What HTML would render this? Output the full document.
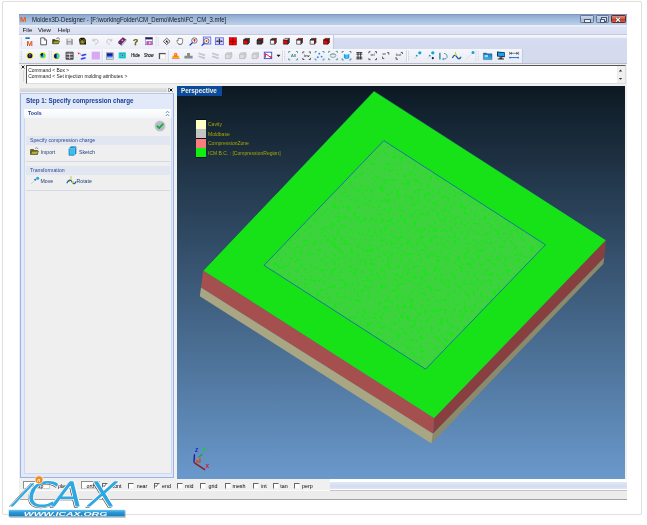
<!DOCTYPE html>
<html>
<head>
<meta charset="utf-8">
<title>Moldex3D-Designer</title>
<style>
html,body{margin:0;padding:0;}
body{width:647px;height:525px;background:#fff;position:relative;overflow:hidden;font-family:"Liberation Sans",sans-serif;color:#000;}
.abs{position:absolute;}
#frame{left:1.6px;top:1.3px;width:638.3px;height:512px;border:1px solid #e0e0e0;border-radius:2px;box-shadow:0 0 1px #ececec;background:#fff;}
#win{will-change:transform;filter:blur(0.3px);left:19px;top:14px;width:608px;height:486px;background:#f0f0f0;overflow:hidden;}
/* all coords inside #win are page coords minus (19,14) */
#title{left:0;top:0;width:608px;height:11px;background:linear-gradient(#6f86a8 0,#8ea9cf 1px,#9db6d8 4px,#b7cde8 10px);}
#title .t{left:13px;top:1.8px;font-size:6.8px;line-height:7px;white-space:pre;color:#1a1a1a;transform:scaleX(0.885);transform-origin:0 50%;}
.wb{top:1.2px;height:7.8px;box-sizing:border-box;border:0.6px solid #66789a;border-radius:1.2px;background:linear-gradient(#c9d6ea,#b3c4de 48%,#a3b7d6 52%,#bccbe4);}
#menu{left:0;top:11px;width:608px;height:9px;background:linear-gradient(#f1f3fb 0,#dfe4f5 2.5px,#dae0f3 8px);border-bottom:1px solid #c6cbdc;}
#menu span{position:absolute;top:1.5px;font-size:6px;line-height:7px;color:#111;}
#tb1{left:0;top:21px;width:608px;height:13.5px;background:linear-gradient(#f7f8fc 0,#eceef8 2.5px,#d7dcf0 3.5px,#d4daef 100%);}
#tb1 .bar{left:0;top:0;width:313.5px;height:13.5px;background:linear-gradient(#f9f9fd,#eceef7);border-right:1px solid #c5cadb;}
#tb2{left:0;top:34.5px;width:608px;height:14px;background:#d5dbef;}
#tb2 .bar{left:0;top:0;width:502.5px;height:14px;background:linear-gradient(#f6f7fc,#e9ecf6);border-right:1px solid #c5cadb;}
#cmd{left:0;top:48.5px;width:608px;height:23px;background:#f0f0f0;border-top:1px solid #b9bcc4;}
#cmdbox{left:7.3px;top:1px;width:598px;height:17.3px;background:#fff;border:1px solid #9a9a9a;border-top-color:#555;border-left-color:#555;border-right-color:#ddd;border-bottom-color:#ddd;}
#cmdbox div{position:absolute;left:1px;font-size:4.9px;line-height:6px;white-space:pre;color:#222;}
#lp{left:0;top:71.5px;width:158px;height:393px;background:#f0f0f0;}
#vp{left:158px;top:71.5px;width:448.2px;height:393.1px;overflow:hidden;}
.lg{left:31px;font-size:5px;line-height:6px;color:#a8a800;white-space:pre;}
.sh{left:6.5px;width:140px;height:9px;padding-left:4.5px;background:#e1e6f1;font-size:5.2px;line-height:9px;color:#2b4c96;white-space:pre;}
.lb{font-size:5.2px;line-height:6px;color:#223c80;white-space:pre;}
#sb{left:0;top:464.5px;width:608px;height:21.5px;background:#fff;}
.cb{top:4.3px;width:4.2px;height:4.2px;background:#fff;border-top:0.7px solid #666;border-left:0.7px solid #666;border-right:0.5px solid #f4f4f4;border-bottom:0.5px solid #f4f4f4;}
.st{top:4px;font-size:5.3px;line-height:6px;color:#000;white-space:pre;}
.fld{top:2px;height:8px;background:#fff;border:0.6px solid #d0d0d0;border-top-color:#8e8e8e;border-left-color:#8e8e8e;box-sizing:border-box;}
</style>
</head>
<body>
<div id="frame" class="abs"></div>
<div id="win" class="abs">
  <div id="title" class="abs"><div class="abs" style="left:1px;top:1.8px;font-size:7.6px;line-height:8px;font-weight:bold;color:#e25a1a;">M</div><div class="abs wb" style="left:561px;width:13.5px;"></div><div class="abs" style="left:565.3px;top:5px;width:4.6px;height:1.8px;background:#e8eef8;border:0.5px solid #4a566c;border-radius:0.5px;"></div>
<div class="abs wb" style="left:576.5px;width:13.5px;"></div><div class="abs" style="left:582.3px;top:3.2px;width:3.6px;height:2.6px;border:0.6px solid #4a566c;background:#dfe7f4;"></div><div class="abs" style="left:580.6px;top:4.6px;width:3.6px;height:2.6px;border:0.6px solid #4a566c;background:#e8eef8;"></div>
<div class="abs wb" style="left:591.8px;width:14.9px;background:linear-gradient(#e0907e,#cf5a48 45%,#c03a28 50%,#d0584a);border-color:#6a2a24;"></div>
<svg class="abs" style="left:596.3px;top:2.7px" width="6" height="5.400" viewBox="0 0 6 5.400"><path d="M0.900 0.700L5.100 4.700M5.100 0.700L0.900 4.700" stroke="#4a2a2a" stroke-width="2"/><path d="M0.900 0.700L5.100 4.700M5.100 0.700L0.900 4.700" stroke="#fff" stroke-width="1.200"/></svg><div class="t abs">Moldex3D-Designer - [F:\workingFolder\CM_Demo\Mesh\FC_CM_3.mfe]</div></div>
  <div id="menu" class="abs"><span style="left:3.6px">File</span><span style="left:19px">View</span><span style="left:38.8px">Help</span></div>
  <div id="tb1" class="abs"><div class="bar abs"></div></div>
  <div id="tb2" class="abs"><div class="bar abs"></div></div>
<svg class="abs" style="left:0;top:21px" width="608" height="28" viewBox="19 35 608 28">
<defs><linearGradient id="mg" x1="0" y1="0" x2="0" y2="1"><stop offset="0" stop-color="#f08a10"/><stop offset="1" stop-color="#c8281c"/></linearGradient><linearGradient id="mon" x1="0" y1="0" x2="0" y2="1"><stop offset="0" stop-color="#05055a"/><stop offset="0.45" stop-color="#1030e0"/><stop offset="1" stop-color="#a8e8ff"/></linearGradient><linearGradient id="og" x1="0" y1="0" x2="0" y2="1"><stop offset="0" stop-color="#ff3a00"/><stop offset="0.6" stop-color="#ffc400"/><stop offset="1" stop-color="#e01818"/></linearGradient><linearGradient id="fb" x1="0" y1="0" x2="0" y2="1"><stop offset="0" stop-color="#1c6cb8"/><stop offset="1" stop-color="#38b4ec"/></linearGradient></defs>
<path d="M21.3 37V46" stroke="#b4b8c6" stroke-width="0.8" stroke-dasharray="0.8 0.9"/>
<path d="M21.3 51V61" stroke="#b4b8c6" stroke-width="0.8" stroke-dasharray="0.8 0.9"/>
<rect x="25.3" y="37.3" width="4.6" height="1.8" rx="0.6" fill="#1a7fd4"/>
<text x="26.6" y="45.6" font-family="Liberation Sans,sans-serif" font-weight="bold" font-size="7.6" fill="url(#mg)">M</text>
<path d="M40.7 37.9h3.6l2.2 2.2v4.7h-5.8z" fill="#fff" stroke="#3a3a3a" stroke-width="0.8" stroke-linejoin="round"/><path d="M44.3 37.9v2.2h2.2" fill="none" stroke="#3a3a3a" stroke-width="0.6"/>
<path d="M52.6 39.6h2.4l0.7 0.8h2.6v3.2h-5.7z" fill="#4c4a10" stroke="#1e1d08" stroke-width="0.5"/><path d="M53.9 41.1h5.9l-1.4 2.6h-5.8z" fill="#a8a230" stroke="#2a2808" stroke-width="0.45"/><path d="M56.4 39c0.6-1.4 2.2-1.6 3-0.4l-0.1 1" fill="none" stroke="#222" stroke-width="0.6"/>
<path d="M66.4 38.7h5.6l0.9 0.9v5.1h-6.5z" fill="#9c9ca0"/><rect x="67.6" y="38.7" width="3.6" height="2.4" fill="#e4e4e8"/><rect x="67.9" y="42.3" width="3.2" height="2.4" fill="#cfcfd4"/>
<path d="M79 39.2l1.8-1.5h3.4l1.8 2.3v4.6h-6.2z" fill="#14140a"/><path d="M80.4 40.6h3.4v3h-3.4z" fill="#8c861c"/><circle cx="83.6" cy="41.2" r="1.5" fill="none" stroke="#b0a830" stroke-width="0.7"/><path d="M79.4 38.3l1.6 2.2" stroke="#b0a830" stroke-width="0.7"/>
<path d="M93.6 40.4c1.6-2 4.6-1.2 4.4 1.2c-0.2 1.6-1.6 2.4-3 2.6" fill="none" stroke="#b4b6bc" stroke-width="0.8"/><path d="M93 38.6v2.4h2.4" fill="none" stroke="#b4b6bc" stroke-width="0.8"/>
<path d="M111.2 40.4c-1.6-2-4.6-1.2-4.4 1.2c0.2 1.6 1.6 2.4 3 2.6" fill="none" stroke="#b4b6bc" stroke-width="0.8"/><path d="M111.8 38.6v2.4h-2.4" fill="none" stroke="#b4b6bc" stroke-width="0.8"/>
<path d="M118.3 41.6l4.6-4.3l3.2 2.2l-4.4 4.6z" fill="#6e1e84"/><path d="M118.3 41.6l3.4 2.5v1.5l-3.4-2.4z" fill="#3a1048"/><path d="M121.7 44.1l4.4-4.6v1.4l-4.4 4.7z" fill="#d8d8e0" stroke="#444" stroke-width="0.3"/><circle cx="122.4" cy="40.3" r="0.9" fill="#f0c020"/>
<text x="133" y="44.6" font-family="Liberation Sans,sans-serif" font-weight="bold" font-size="8.6" fill="#6e6e0c" stroke="#3c3c06" stroke-width="0.25">?</text>
<rect x="145.5" y="37.4" width="7" height="7.4" fill="#fff" stroke="#6a5a9a" stroke-width="0.5"/><rect x="145.5" y="37.4" width="7" height="2" fill="#1a1a5c"/><rect x="146.4" y="41.2" width="6.1" height="3.6" fill="#b050b8"/><rect x="148.8" y="42.2" width="2.6" height="1.6" fill="#f0e0ff"/><rect x="150.2" y="42.6" width="1.2" height="1" fill="#e03030"/>
<path d="M156.2 36.5V47" stroke="#cfd2de" stroke-width="0.9"/>
<path d="M157.1 36.5V47" stroke="#fdfdff" stroke-width="0.8"/>
<path d="M158.2 37V46" stroke="#b4b8c6" stroke-width="0.8" stroke-dasharray="0.8 0.9"/>
<path d="M166.7 38.2l3.4 3.2l-3.4 3.2l-3.4-3.2z" fill="#fafafa" stroke="#333" stroke-width="0.8"/><path d="M166 40.2l2.4 1l-1.2 0.5l0.6 1.3l-0.7 0.3l-0.6-1.3l-0.9 0.7z" fill="#222"/>
<path d="M177 41.4c-0.6-1.2 0.6-1.6 1.1-0.6v-1.9c0-0.8 1-0.8 1.1 0c0.1-0.9 1.1-0.9 1.2 0c0.1-0.7 1.1-0.7 1.2 0.1c0.1-0.5 1-0.5 1 0.3v2.7c0 1.6-0.9 2.6-2.6 2.6c-1.500 0-2.200-1-3-3.200z" fill="#fcfcfc" stroke="#444" stroke-width="0.6"/><path d="M178.100 43.600c1.200 0.800 2.900 0.700 4-0.100" stroke="#555" stroke-width="0.500" fill="none"/>
<path d="M192.600 42.500l-2.600 2.500" stroke="#1c34e0" stroke-width="1.200" stroke-linecap="round"/><circle cx="194.400" cy="40.500" r="2.700" fill="#f4f4f8" stroke="#444" stroke-width="0.700"/><circle cx="194.500" cy="40.100" r="1.100" fill="#e02020"/><path d="M194.500 41v1.300" stroke="#e02020" stroke-width="0.600"/>
<rect x="203.300" y="37" width="7.500" height="7" fill="#e8e8ff" stroke="#5a5af0" stroke-width="0.800"/><path d="M204.400 43.100l-2.400 2.300" stroke="#1c34e0" stroke-width="1.200" stroke-linecap="round"/><circle cx="206.400" cy="41" r="2.600" fill="#f6f6fa" stroke="#444" stroke-width="0.700"/><circle cx="206.500" cy="41" r="0.900" fill="#f04020"/>
<rect x="215.400" y="37.800" width="8" height="6.800" fill="#d4d4ff" stroke="#6a6af4" stroke-width="0.900"/><path d="M216.600 41.200h5.600M219.400 38.800v4.800" stroke="#111" stroke-width="0.800"/><path d="M219.400 38.400l-1 1.200h2zM219.400 44l-1-1.200h2zM216.200 41.200l1.200-1v2zM222.600 41.200l-1.200-1v2z" fill="#111"/>
<rect x="229.200" y="37.700" width="7.300" height="7.300" fill="#f40000" stroke="#8a0000" stroke-width="0.500"/><path d="M232.850 37.700v7.300M229.200 41.350h7.300" stroke="#7c0000" stroke-width="0.700"/>
<g stroke="#1c1c1c" stroke-width="0.6" stroke-linejoin="round"><path d="M243.5 40.0h4.400v4.200h-4.400z" fill="#ee0000"/><path d="M245.0 38.4h4.4l-1.5 1.600h-4.400z" fill="#3a3a3e"/><path d="M247.9 40.0l1.500-1.600v4.200l-1.500 1.600z" fill="#3a3a3e"/></g>
<g stroke="#1c1c1c" stroke-width="0.6" stroke-linejoin="round"><path d="M257.0 40.0h4.400v4.200h-4.400z" fill="#3a3a3e"/><path d="M258.5 38.4h4.4l-1.5 1.600h-4.400z" fill="#ee0000"/><path d="M261.4 40.0l1.500-1.600v4.200l-1.500 1.600z" fill="#8a0000"/></g>
<g stroke="#1c1c1c" stroke-width="0.6" stroke-linejoin="round"><path d="M270.4 40.0h4.400v4.200h-4.400z" fill="#f6f6f8"/><path d="M271.9 38.4h4.4l-1.5 1.600h-4.400z" fill="#3a3a3e"/><path d="M274.8 40.0l1.500-1.600v4.200l-1.500 1.600z" fill="#ee0000"/></g>
<g stroke="#1c1c1c" stroke-width="0.6" stroke-linejoin="round"><path d="M283.4 40.0h4.400v4.200h-4.400z" fill="#ee0000"/><path d="M284.9 38.4h4.4l-1.5 1.600h-4.400z" fill="#f6f6f8"/><path d="M287.8 40.0l1.500-1.600v4.200l-1.500 1.600z" fill="#3a3a3e"/></g>
<g stroke="#1c1c1c" stroke-width="0.6" stroke-linejoin="round"><path d="M296.6 40.0h4.400v4.200h-4.400z" fill="#f6f6f8"/><path d="M298.1 38.4h4.4l-1.5 1.600h-4.400z" fill="#ee0000"/><path d="M301.0 40.0l1.500-1.600v4.200l-1.500 1.600z" fill="#3a3a3e"/></g>
<g stroke="#1c1c1c" stroke-width="0.6" stroke-linejoin="round"><path d="M310.1 40.0h4.400v4.200h-4.400z" fill="#f6f6f8"/><path d="M311.6 38.4h4.4l-1.5 1.600h-4.400z" fill="#3a3a3e"/><path d="M314.5 40.0l1.500-1.600v4.200l-1.500 1.600z" fill="#ee0000"/></g>
<g stroke="#1c1c1c" stroke-width="0.6" stroke-linejoin="round"><path d="M323.5 40.0h4.400v4.200h-4.400z" fill="#ee0000"/><path d="M325.0 38.4h4.4l-1.5 1.600h-4.400z" fill="#d00000"/><path d="M327.9 40.0l1.500-1.600v4.200l-1.500 1.600z" fill="#b00000"/></g>
<circle cx="29.9" cy="55.7" r="3.300" fill="#f4f000"/>
<circle cx="29.9" cy="55.7" r="2.500" fill="#0c0c58"/><path d="M28.9 55.2l1-1l1 1M29.9 54.5v2.400" stroke="#c8c820" stroke-width="0.500" fill="none"/>
<circle cx="42.7" cy="55.5" r="3.300" fill="#f4f000"/>
<circle cx="42.7" cy="55.5" r="2.600" fill="#40d890"/><path d="M40.300000000000004 54.5a2.600 2.600 0 0 1 2.600-1.600l0.400 2.800l-1.200 1.600z" fill="#10105c"/><circle cx="43.7" cy="56.1" r="1.200" fill="#30c8f0"/>
<path d="M49.3 50V62" stroke="#cfd2de" stroke-width="0.9"/>
<path d="M50.199999999999996 50V62" stroke="#fdfdff" stroke-width="0.8"/>
<path d="M51.3 51V61" stroke="#b4b8c6" stroke-width="0.8" stroke-dasharray="0.8 0.9"/>
<circle cx="56.6" cy="56" r="3.300" fill="#f4f000"/>
<circle cx="56.6" cy="56" r="2.600" fill="#10105c"/><path d="M56.6 53.4a2.600 2.600 0 0 1 0 5.200z" fill="#30d8e8"/>
<rect x="65.600" y="51.800" width="8" height="8" rx="0.800" fill="#4a4a4a"/><path d="M66.400 54.400h6.400M66.400 57.200h6.400M69.600 52.600v6.400" stroke="#e8e8e8" stroke-width="0.800"/><rect x="66.400" y="52.600" width="6.400" height="1.200" fill="#8a8a8a"/>
<path d="M77.600 52.200l2.200 1.300l-1.300 1z" fill="#e81010"/><path d="M79.600 53.300l1.200 1" stroke="#e81010" stroke-width="0.700"/><ellipse cx="83.800" cy="54.900" rx="2.800" ry="1" transform="rotate(-14 83.800 54.900)" fill="#3848f0"/><ellipse cx="83.200" cy="58.400" rx="2.800" ry="1" transform="rotate(-14 83.200 58.400)" fill="#3848f0"/>
<rect x="91.700" y="51.700" width="8.200" height="7.800" fill="#d9a8f4"/>
<path d="M102.3 50V62" stroke="#cfd2de" stroke-width="0.9"/>
<path d="M103.2 50V62" stroke="#fdfdff" stroke-width="0.8"/>
<rect x="106.300" y="52.800" width="7" height="6.400" fill="#d8d8d8" stroke="#555" stroke-width="0.400"/><rect x="106.900" y="53.300" width="5.800" height="4.900" fill="url(#mon)"/>
<rect x="118.600" y="52.200" width="7.400" height="6.400" rx="0.600" fill="#28d8dc"/><rect x="120" y="53.400" width="4.600" height="4" fill="none" stroke="#1890a0" stroke-width="0.500"/><circle cx="122.400" cy="55.400" r="0.800" fill="#e03030"/>
<text x="131.2" y="57.4" font-family="Liberation Sans,sans-serif" font-size="5.1" fill="#111" stroke="#111" stroke-width="0.15" textLength="8.6" lengthAdjust="spacingAndGlyphs">Hide</text>
<text x="143.9" y="57.4" font-family="Liberation Sans,sans-serif" font-size="5.1" fill="#111" stroke="#111" stroke-width="0.15" textLength="9.6" lengthAdjust="spacingAndGlyphs">Show</text>
<rect x="158.900" y="53" width="6.800" height="6" fill="#fbfbfb" stroke="#bbb" stroke-width="0.300"/><path d="M158.900 53.600h6.800" stroke="#555" stroke-width="1.200"/><path d="M159.500 53v6" stroke="#555" stroke-width="1.200"/>
<path d="M168.8 50V62" stroke="#cfd2de" stroke-width="0.9"/>
<path d="M169.70000000000002 50V62" stroke="#fdfdff" stroke-width="0.8"/>
<path d="M171.800 58.600c0.300-2.200 1.700-2.800 2.600-3h2.600c0.900 0.200 2.300 0.800 2.600 3z" fill="url(#og)"/><circle cx="175.700" cy="54.300" r="1.600" fill="#ff5a10"/><circle cx="175.700" cy="54.400" r="0.800" fill="#ffd020"/>
<path d="M187 53h3v2.800h2.600v2.600h-8.200v-2.600h2.600z" fill="#8c8c90"/>
<path d="M198.6 53.2l6.4 2.2M198.6 56.2l6.4 2.2" stroke="#c4c6cc" stroke-width="1.7"/>
<path d="M212.1 53.2l6.4 2.2M212.1 56.2l6.4 2.2" stroke="#c4c6cc" stroke-width="1.7"/>
<path d="M225.4 54.2l1.600-1.400h4.800v4.400l-1.600 1.400h-4.800z" fill="#dcdce0" stroke="#a8a8ae" stroke-width="0.600"/><path d="M225.4 54.2h4.800v4.400M230.2 54.2l1.600-1.400" stroke="#a8a8ae" stroke-width="0.500" fill="none"/>
<path d="M239.60000000000002 54.2l1.600-1.400h4.800v4.400l-1.600 1.400h-4.800z" fill="#dcdce0" stroke="#a8a8ae" stroke-width="0.600"/><path d="M239.60000000000002 54.2h4.800v4.400M244.4 54.2l1.600-1.400" stroke="#a8a8ae" stroke-width="0.500" fill="none"/>
<path d="M252.10000000000002 54.2l1.600-1.400h4.800v4.400l-1.600 1.400h-4.800z" fill="#dcdce0" stroke="#a8a8ae" stroke-width="0.600"/><path d="M252.10000000000002 54.2h4.800v4.400M256.90000000000003 54.2l1.600-1.400" stroke="#a8a8ae" stroke-width="0.500" fill="none"/>
<rect x="264.300" y="52.200" width="7.400" height="6.400" fill="#fff" stroke="#3a4ae0" stroke-width="0.900"/><path d="M265.400 57.600v-4l5 3.600" stroke="#e02020" stroke-width="1" fill="none"/><circle cx="271" cy="57" r="0.900" fill="#e02020"/>
<path d="M276.500 54.800h4l-2 2.200z" fill="#111"/>
<path d="M282.6 50V62" stroke="#cfd2de" stroke-width="0.9"/>
<path d="M283.5 50V62" stroke="#fdfdff" stroke-width="0.8"/>
<path d="M284.6 51V61" stroke="#b4b8c6" stroke-width="0.8" stroke-dasharray="0.8 0.9"/>
<path d="M288.70000000000005 53.1V51.5H290.30000000000007M295.9 51.5H297.5V53.1M297.5 58.300000000000004V59.900000000000006H295.9M290.30000000000007 59.900000000000006H288.70000000000005V58.300000000000004" stroke="#3c8a84" stroke-width="0.800" fill="none"/>
<text x="290.700" y="57.300" font-family="Liberation Sans,sans-serif" font-size="4.400" font-weight="bold" fill="#4a8a88">All</text>
<path d="M302.8 53.50000000000001V51.900000000000006H304.40000000000003M308.8 51.900000000000006H310.40000000000003V53.50000000000001M310.40000000000003 57.9V59.5H308.8M304.40000000000003 59.5H302.8V57.9" stroke="#333" stroke-width="0.800" fill="none"/>
<text x="304.200" y="56.800" font-family="Liberation Sans,sans-serif" font-size="3.800" font-weight="bold" fill="#333">inv</text>
<path d="M315.20000000000005 53.1V51.5H316.80000000000007M322.4 51.5H324.0V53.1M324.0 58.300000000000004V59.900000000000006H322.4M316.80000000000007 59.900000000000006H315.20000000000005V58.300000000000004" stroke="#3c8a84" stroke-width="0.800" fill="none"/>
<circle cx="319.300" cy="53.700" r="0.900" fill="#2080f0"/><circle cx="317.800" cy="57.200" r="0.900" fill="#2080f0"/><circle cx="321.600" cy="56.600" r="0.900" fill="#2080f0"/>
<path d="M328.6 52.9V51.3H330.20000000000005M335.79999999999995 51.3H337.4V52.9M337.4 58.1V59.7H335.79999999999995M330.20000000000005 59.7H328.6V58.1" stroke="#3c8a84" stroke-width="0.800" fill="none"/>
<ellipse cx="333" cy="55.500" rx="2.800" ry="1.900" fill="none" stroke="#5a8c8c" stroke-width="0.700"/><path d="M330.600 54.600h4.800" stroke="#5a8c8c" stroke-width="0.500"/>
<path d="M342.1 53.1V51.5H343.70000000000005M349.29999999999995 51.5H350.9V53.1M350.9 58.300000000000004V59.900000000000006H349.29999999999995M343.70000000000005 59.900000000000006H342.1V58.300000000000004" stroke="#3c6a80" stroke-width="0.800" fill="none"/>
<path d="M343.900 53.800l1.600 1h2.400l1.400-1v4l-1.400 1.200h-2.400l-1.600-1.200z" fill="#18a0e4"/><path d="M345.500 54.800h2.400v4h-2.400z" fill="#40c4f8"/>
<path d="M356.300 52.600h6M356.300 54.200h6M356.300 57.200h6M356.300 58.800h6M358 52v7.400M360.600 52v7.400" stroke="#333" stroke-width="0.900"/>
<path d="M368.9 53.300000000000004V51.7H370.5M374.9 51.7H376.5V53.300000000000004M376.5 58.1V59.7H374.9M370.5 59.7H368.9V58.1" stroke="#333" stroke-width="0.800" fill="none"/>
<text x="370.400" y="56.300" font-family="Liberation Sans,sans-serif" font-size="3.400" fill="#333">sel</text>
<path d="M382.600 58.600v-2M382.600 58.600h1.600M387.200 52.600h1.600v2" stroke="#333" stroke-width="0.800" fill="none"/><text x="382.400" y="55" font-family="Liberation Sans,sans-serif" font-size="3.200" fill="#333">on</text>
<path d="M396 59.200v-2.200M396 59.200h2M400.800 52.400h1.600v1.600" stroke="#333" stroke-width="0.800" fill="none"/><text x="395.800" y="56.200" font-family="Liberation Sans,sans-serif" font-size="3.400" fill="#333">last</text>
<path d="M406.5 50V62" stroke="#cfd2de" stroke-width="0.9"/>
<path d="M407.4 50V62" stroke="#fdfdff" stroke-width="0.8"/>
<path d="M408.5 51V61" stroke="#b4b8c6" stroke-width="0.8" stroke-dasharray="0.8 0.9"/>
<path d="M414.200 58.800l2-2" stroke="#b8bcc0" stroke-width="0.600"/><circle cx="416.700" cy="55.700" r="0.900" fill="#2890a8"/><circle cx="419.800" cy="52.800" r="1.600" fill="#10a0e8"/>
<path d="M427.200 58.800l2-2" stroke="#c8ccd0" stroke-width="0.600"/><circle cx="429.700" cy="55.700" r="0.900" fill="#2890a8"/><circle cx="432.800" cy="52.800" r="1.600" fill="#10a0e8"/><path d="M432.800 56.800l1.300 1.300l-1.300 1.300l-1.300-1.300z" fill="#111"/>
<path d="M439.900 52.800v6.800" stroke="#2a8aa0" stroke-width="1.400"/><path d="M444 53.400c4 0.200 4.200 5.600 0.400 5.600h-1.400" stroke="#4a8a98" stroke-width="0.900" fill="none"/><path d="M442 59l1.600-1.200v2.400z" fill="#4a8a98"/>
<path d="M455.600 51.800v3.400" stroke="#d8c800" stroke-width="0.900"/><path d="M452.400 58c1.600-3.600 3.200-3 4.600-0.800s3 2.200 4-0.400" stroke="#1858b0" stroke-width="1.300" fill="none"/><circle cx="455.800" cy="54.800" r="0.900" fill="#e8d400"/><circle cx="460" cy="58" r="0.800" fill="#20a040"/>
<path d="M466.800 58.800l5.600-5.600" stroke="#d0d2d8" stroke-width="0.600"/><circle cx="473" cy="52.600" r="1.500" fill="#10a0e8"/>
<path d="M476.1 50V62" stroke="#cfd2de" stroke-width="0.9"/>
<path d="M477.0 50V62" stroke="#fdfdff" stroke-width="0.8"/>
<path d="M478.1 51V61" stroke="#b4b8c6" stroke-width="0.8" stroke-dasharray="0.8 0.9"/>
<path d="M483.400 53h3l0.600 0.800h5v5.800h-8.600z" fill="url(#fb)" stroke="#1a4c80" stroke-width="0.400"/><rect x="484.600" y="55" width="3.400" height="2.200" fill="#9cdcf8"/>
<path d="M497 51.600l7.800 0.600v5l-7.800-0.600z" fill="#083060"/><path d="M498 52.600l6 0.400v3.200l-6-0.400z" fill="#20a0e8"/><path d="M499.400 57.200h3v1.400h1.600v1h-6.200v-1h1.600z" fill="#333"/>
<path d="M509.600 51.800v3M518.600 51.800v3M512 53.300h4.200M510.200 53.300l1.400-0.900v1.800zM518 53.300l-1.400-0.900v1.800z" stroke="#444" stroke-width="0.600" fill="#444"/><path d="M510 57.600h8.200" stroke="#2070e0" stroke-width="1"/><circle cx="510" cy="57.600" r="0.900" fill="#2070e0"/><circle cx="518.200" cy="57.600" r="0.900" fill="#2070e0"/>
</svg>
  <div id="cmd" class="abs"><svg class="abs" style="left:1.5px;top:1px" width="4" height="4" viewBox="0 0 4 4"><path d="M0.600 0.600L3.400 3.400M3.400 0.600L0.600 3.400" stroke="#111" stroke-width="0.900"/></svg>
<div class="abs" style="left:2.5px;top:6.5px;width:2.2px;height:11.5px;background:linear-gradient(90deg,#fafafa,#cfcfcf);border-radius:1px;"></div>
<div id="cmdbox" class="abs"><span class="abs" style="right:0;top:0;width:8.3px;height:100%;background:#efefef;"></span><div style="top:2.3px">Command &lt; Box &gt;</div><div style="top:8.9px">Command &lt; Set injection molding attributes &gt;</div></div><svg class="abs" style="left:599px;top:4px" width="5" height="14" viewBox="0 0 5 14"><path d="M0.800 3.400L2.500 1.600L4.200 3.400z" fill="#333"/><path d="M0.800 10L2.500 11.800L4.200 10z" fill="#333"/></svg></div>
  <div id="lp" class="abs">
<div class="abs" style="left:1px;top:2.5px;width:147px;height:3.5px;background:linear-gradient(#e2e2e2,#d2d2d2);border-radius:1px;"></div>
<div class="abs" style="left:148.5px;top:2px;width:1px;height:4.5px;background:#999;"></div>
<svg class="abs" style="left:150.3px;top:2.2px" width="4" height="4" viewBox="0 0 4 4"><path d="M0.6 0.6L3.4 3.4M3.4 0.6L0.6 3.4" stroke="#111" stroke-width="1"/></svg>
<div class="abs" style="left:1px;top:7.3px;width:152.4px;height:383.2px;background:#e2e9f9;border:1px solid #9ab3e4;border-top-color:#b5c8ee;"></div>
<div class="abs" style="left:7px;top:11.4px;font-size:7.1px;line-height:8px;font-weight:bold;color:#1c3f94;white-space:pre;transform:scaleX(0.88);transform-origin:0 50%;">Step 1: Specify compression charge</div>
<div class="abs" style="left:4.5px;top:23.5px;width:147.5px;height:8.5px;background:linear-gradient(#ffffff,#f3f5fb);border-radius:1px 1px 0 0;"></div>
<div class="abs" style="left:8.5px;top:24.5px;font-size:6px;line-height:7px;font-weight:bold;color:#1c3c8c;transform:scaleX(0.87);transform-origin:0 50%;">Tools</div>
<svg class="abs" style="left:146px;top:24.5px" width="5" height="7" viewBox="0 0 5 7"><path d="M0.8 3L2.5 1.2L4.2 3M0.8 6L2.5 4.2L4.2 6" stroke="#5b78b8" stroke-width="0.8" fill="none"/></svg>
<div class="abs" style="left:4.5px;top:32px;width:146.5px;height:355.5px;background:#efefef;border:0.5px solid #cdd9f3;border-top:none;"></div>
<svg class="abs" style="left:135px;top:34.5px" width="12" height="12" viewBox="0 0 12 12"><circle cx="6" cy="6" r="5.5" fill="#c4cbd6"/><circle cx="6" cy="6" r="4.6" fill="#b4bcc9"/><path d="M3.3 6.2L5.2 8.1L8.8 4.2" stroke="#1fa83a" stroke-width="1.7" fill="none" stroke-linecap="round" stroke-linejoin="round"/></svg>
<div class="abs sh" style="top:50px;">Specify compression charge</div>
<div class="abs" style="left:6.5px;top:75.5px;width:144.5px;height:0.7px;background:#d5d9e2;"></div>
<div class="abs sh" style="top:80px;">Transformation</div>
<div class="abs" style="left:6.5px;top:104.5px;width:144.5px;height:0.7px;background:#d5d9e2;"></div>
<div class="abs lb" style="left:21.5px;top:63px;">Import</div>
<div class="abs lb" style="left:60px;top:63px;">Sketch</div>
<div class="abs lb" style="left:21.5px;top:92.3px;">Move</div>
<div class="abs lb" style="left:57.5px;top:92.3px;">Rotate</div>
<!-- import icon (folder) -->
<svg class="abs" style="left:11px;top:61.3px" width="9" height="8" viewBox="0 0 9 8"><path d="M0.5 2.5h3l0.8 1h3.2v3.8h-7z" fill="#6e6a16" stroke="#26240a" stroke-width="0.5"/><path d="M2 4.2h6.6l-1.3 3.1h-6.6z" fill="#b9b23a" stroke="#26240a" stroke-width="0.4"/><path d="M5 1.8c1-1.4 2.4-1.2 3 0" stroke="#333" stroke-width="0.5" fill="none"/></svg>
<!-- sketch icon (cyan cube) -->
<svg class="abs" style="left:48.5px;top:60.6px" width="9" height="10" viewBox="0 0 9 10"><path d="M1 2.8L2.8 0.8h5.2v6.4L6.2 9.2H1z" fill="#1a9ee0" stroke="#0c5f9c" stroke-width="0.6"/><path d="M1 2.8h5.2v6.4M6.2 2.8L8 0.8" stroke="#bfe8ff" stroke-width="0.6" fill="none"/><rect x="1.6" y="3.4" width="4" height="5.2" fill="#3cc0f4"/></svg>
<!-- move icon -->
<svg class="abs" style="left:10.5px;top:90px" width="10" height="9" viewBox="0 0 10 9"><path d="M1 8L4 5" stroke="#9aa" stroke-width="0.6" stroke-dasharray="1 0.7"/><circle cx="5.2" cy="3.8" r="1" fill="#2270d0"/><circle cx="7.6" cy="2.2" r="1.5" fill="#18a8e8"/></svg>
<!-- rotate icon -->
<svg class="abs" style="left:46.5px;top:89.3px" width="11" height="10" viewBox="0 0 11 10"><path d="M0.8 8.2C3 3.5 5 5 6.5 7.5S9.5 8 10 6.5" stroke="#1c5ca8" stroke-width="1.2" fill="none"/><path d="M5 1v4" stroke="#c8b400" stroke-width="0.7"/><circle cx="6.8" cy="7.3" r="1.1" fill="#e0c800"/><circle cx="3" cy="6" r="0.8" fill="#2aa02a"/></svg>
</div>
  <div id="vp" class="abs"><svg class="abs" style="left:0;top:0" width="449" height="393.5" viewBox="0 0 449 393.5">
<defs>
<linearGradient id="bg" x1="0" y1="0" x2="0" y2="1"><stop offset="0" stop-color="#0c1923"/><stop offset="1" stop-color="#6a99cc"/></linearGradient>
<filter id="mot" x="0" y="0" width="1" height="1" color-interpolation-filters="sRGB"><feTurbulence type="fractalNoise" baseFrequency="0.3" numOctaves="2" seed="7" result="n"/><feColorMatrix in="n" type="matrix" values="0 0 0 0 0.09  0 0 0 0 0.9  0 0 0 0 0.09  7 0 0 0 -3.9" result="p"/><feComposite in="p" in2="SourceGraphic" operator="atop"/></filter>
</defs>
<rect width="449" height="393.5" fill="url(#bg)"/>
<polygon points="26.2,184.5 257.1,331.9 256.0,347.8 24.0,201.5" fill="#a5504f"/>
<polygon points="257.1,331.9 429.0,154.0 427.3,171.5 256.0,347.8" fill="#873f40"/>
<polygon points="24.0,201.5 256.0,347.8 254.5,357.5 22.8,210.2" fill="#a9a684"/>
<polygon points="256.0,347.8 427.3,171.5 426.3,177.9 254.5,357.5" fill="#8c8a6c"/>
<polygon points="197.0,5.1 429.0,154.0 257.1,331.9 26.2,184.5" fill="#17e217"/>
<polyline points="26.2,184.5 197.0,5.1 429.0,154.0" fill="none" stroke="#1c2a78" stroke-width="0.6" opacity="0.8"/>
<polygon points="206.8,54.6 368.5,158.8 248.6,283.2 87.0,179.3" fill="#3ed23e" filter="url(#mot)"/>
<polygon points="206.8,54.6 368.5,158.8 248.6,283.2 87.0,179.3" fill="none" stroke="#1a789c" stroke-width="1"/>
<path d="M17.5 368.2L16.9 376.5" stroke="#1a1a9a" stroke-width="1.3"/>
<path d="M21.7 371.1L25.5 368.2" stroke="#1e9a3a" stroke-width="1.1"/>
<path d="M17.1 376.6L28.1 383.8" stroke="#8a1c28" stroke-width="1.4"/>
<rect x="18.7" y="371.9" width="5.2" height="5.2" rx="1" fill="#a0665a"/>
<rect x="19.1" y="372.1" width="3" height="2" fill="#b88070"/>
<text x="18.0" y="365.9" font-family="Liberation Sans,sans-serif" font-weight="bold" font-style="italic" font-size="6.4" fill="#1c28e0">z</text>
<text x="25.4" y="364.6" font-family="Liberation Sans,sans-serif" font-weight="bold" font-style="italic" font-size="6.2" fill="#18d028">y</text>
<text x="28.4" y="381.5" font-family="Liberation Sans,sans-serif" font-weight="bold" font-size="6.4" fill="#e0182c">x</text>
</svg>
<div class="abs" style="left:0;top:0;width:44.5px;height:10px;background:#0b4a9c;"></div>
<div class="abs" style="left:4px;top:1px;font-size:6.4px;line-height:8px;font-weight:bold;color:#f2f0dc;">Perspective</div>
<div class="abs" style="left:18.5px;top:33.5px;width:10.5px;height:38.5px;background:#0a0f14;"></div>
<div class="abs" style="left:19px;top:34px;width:9.5px;height:9px;background:#ffffc8;"></div>
<div class="abs" style="left:19px;top:43.5px;width:9.5px;height:9px;background:#c4c4c4;"></div>
<div class="abs" style="left:19px;top:53px;width:9.5px;height:9px;background:#fa7d7d;"></div>
<div class="abs" style="left:19px;top:62.5px;width:9.5px;height:9px;background:#10f010;"></div>
<div class="abs lg" style="top:35.5px">Cavity</div>
<div class="abs lg" style="top:45px">Moldbase</div>
<div class="abs lg" style="top:54.5px">CompressionZone</div>
<div class="abs lg" style="top:64px">ICM B.C. : [CompressionRegion]</div>
</div>
  <div id="sb" class="abs">
<div class="abs" style="left:0;top:0.5px;width:311px;height:11px;background:#f0f0f0;"></div>
<div class="abs" style="left:311px;top:3.8px;width:297px;height:7.2px;background:linear-gradient(#e3e8f7,#d5dcf1 60%,#dfe4f4);"></div>
<div class="abs" style="left:0;top:11px;width:608px;height:1px;background:#fbfbfb;"></div><div class="abs" style="left:311px;top:11.2px;width:297px;height:0.8px;background:#c6c6c6;"></div>
<div class="abs" style="left:0;top:12px;width:608px;height:8.3px;background:#ececec;"></div>
<div class="abs" style="left:0;top:20.3px;width:608px;height:1px;background:#a4a4a4;"></div>
<div class="abs fld" style="left:3.7px;width:27.8px;"></div>
<div class="abs fld" style="left:62px;width:18.8px;"></div>
<div class="abs st" style="left:13.0px;">snap</div><div class="abs st" style="left:39.0px;">planar</div><div class="abs st" style="left:67.5px;">ortho</div><div class="abs cb" style="left:83.3px;"></div><svg class="abs" style="left:83.3px;top:4.3px" width="5" height="5" viewBox="0 0 5 5"><path d="M1 2.4L2.1 3.6L4 1.2" stroke="#222" stroke-width="0.8" fill="none"/></svg><div class="abs st" style="left:92.5px;">cont</div><div class="abs cb" style="left:108.8px;"></div><div class="abs st" style="left:117.7px;">near</div><div class="abs cb" style="left:134.5px;"></div><svg class="abs" style="left:134.5px;top:4.3px" width="5" height="5" viewBox="0 0 5 5"><path d="M1 2.4L2.1 3.6L4 1.2" stroke="#222" stroke-width="0.8" fill="none"/></svg><div class="abs st" style="left:143.0px;">end</div><div class="abs cb" style="left:158.2px;"></div><div class="abs st" style="left:166.0px;">mid</div><div class="abs cb" style="left:180.8px;"></div><div class="abs st" style="left:189.5px;">grid</div><div class="abs cb" style="left:205.8px;"></div><div class="abs st" style="left:213.5px;">mesh</div><div class="abs cb" style="left:234.1px;"></div><div class="abs st" style="left:242.2px;">int</div><div class="abs cb" style="left:253.5px;"></div><div class="abs st" style="left:261.3px;">tan</div><div class="abs cb" style="left:275.2px;"></div><div class="abs st" style="left:283.0px;">perp</div></div>
</div>

<svg class="abs" style="left:0;top:470px;will-change:transform" width="135" height="55" viewBox="0 470 135 55">
<defs><linearGradient id="lb" x1="0" y1="0" x2="0" y2="1"><stop offset="0" stop-color="#6cc8f0"/><stop offset="0.35" stop-color="#2a9ad8"/><stop offset="1" stop-color="#1878bc"/></linearGradient></defs>
<g font-family="DejaVu Sans,Liberation Sans,sans-serif" font-weight="200" font-size="33" stroke-linejoin="round">
<g transform="translate(-1.1,0.5)" fill="#4a342c" stroke="#4a342c" stroke-width="1.4">
<text transform="translate(7.5,505.8) skewX(-43)" x="0" y="0" font-size="30.5">I</text>
<text transform="translate(24,506.2) skewX(-14) scale(1.3,1)" x="0 20.5 47" y="0">CAX</text>
</g>
<g fill="#fff" stroke="#fff" stroke-width="2.5">
<text transform="translate(7.5,505.8) skewX(-43)" x="0" y="0" font-size="30.5">I</text>
<text transform="translate(24,506.2) skewX(-14) scale(1.3,1)" x="0 20.5 47" y="0">CAX</text>
</g>
<g fill="#2fa8e2" stroke="#2fa8e2" stroke-width="1.2">
<text transform="translate(7.5,505.8) skewX(-43)" x="0" y="0" font-size="30.5">I</text>
<text transform="translate(24,506.2) skewX(-14) scale(1.3,1)" x="0 20.5 47" y="0">CAX</text>
</g>
</g>
<circle cx="39" cy="479.8" r="4" fill="#f08a1c" stroke="#fff" stroke-width="0.6"/>
<text x="37.3" y="481.6" font-family="Liberation Sans,sans-serif" font-style="italic" font-weight="bold" font-size="5" fill="#fff">n</text>
<rect x="9.6" y="510.6" width="116" height="7" fill="#555" opacity="0.55"/>
<rect x="8.7" y="509.8" width="116.3" height="7" fill="url(#lb)" stroke="#e8f6ff" stroke-width="0.4"/>
<text x="23.8" y="515.6" font-family="Liberation Sans,sans-serif" font-style="italic" font-weight="bold" font-size="5.2" fill="#fff" textLength="83.5" lengthAdjust="spacingAndGlyphs">WWW.ICAX.ORG</text>
</svg>
</body>
</html>
